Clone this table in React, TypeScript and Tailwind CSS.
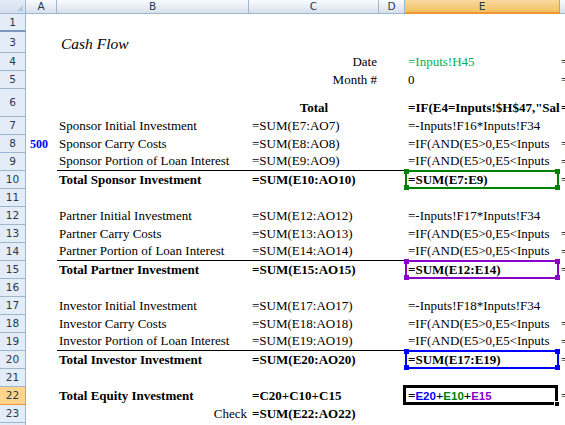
import React from "react";

type RowDef = {
  n: number | null;
  h: number;
  a?: React.ReactNode;
  b?: React.ReactNode;
  bAlign?: "left" | "right";
  c?: React.ReactNode;
  cAlign?: "left" | "right" | "center";
  e?: React.ReactNode;
  f?: boolean;
  line?: boolean;
  box?: "green" | "purple" | "blue" | "active";
  sel?: boolean;
  thick?: boolean;
};

const B = ({ children }: { children: React.ReactNode }) => <span className="font-bold">{children}</span>;

const rows: RowDef[] = [
  { n: 1, h: 18, thick: true },
  {
    n: 3,
    h: 21,
    b: (
      <span className="italic text-[15.5px] pl-[2px] font-['Liberation_Serif','Times_New_Roman',serif]">
        Cash Flow
      </span>
    ),
  },
  { n: 4, h: 18, c: "Date", cAlign: "right", e: <span className="text-[#00B050]">=Inputs!H45</span>, f: true },
  { n: 5, h: 18, c: "Month #", cAlign: "right", e: "0", f: true },
  { n: 6, h: 28, c: <B>Total</B>, cAlign: "center", e: <B>=IF(E4=Inputs!$H$47,"Sal</B>, f: true },
  { n: 7, h: 18, b: "Sponsor Initial Investment", c: "=SUM(E7:AO7)", e: "=-Inputs!F16*Inputs!F34" },
  { n: 8, h: 18, a: <span className="font-bold text-[#0000FF] text-[12px]">500</span>, b: "Sponsor Carry Costs", c: "=SUM(E8:AO8)", e: "=IF(AND(E5>0,E5<Inputs", f: true },
  { n: 9, h: 18, b: "Sponsor Portion of Loan Interest", c: "=SUM(E9:AO9)", e: "=IF(AND(E5>0,E5<Inputs", f: true, line: true },
  { n: 10, h: 18, b: <B>Total Sponsor Investment</B>, c: <B>=SUM(E10:AO10)</B>, e: <B>=SUM(E7:E9)</B>, f: true, box: "green" },
  { n: 11, h: 18 },
  { n: 12, h: 18, b: "Partner Initial Investment", c: "=SUM(E12:AO12)", e: "=-Inputs!F17*Inputs!F34" },
  { n: 13, h: 18, b: "Partner Carry Costs", c: "=SUM(E13:AO13)", e: "=IF(AND(E5>0,E5<Inputs", f: true },
  { n: 14, h: 18, b: "Partner Portion of Loan Interest", c: "=SUM(E14:AO14)", e: "=IF(AND(E5>0,E5<Inputs", f: true, line: true },
  { n: 15, h: 18, b: <B>Total Partner Investment</B>, c: <B>=SUM(E15:AO15)</B>, e: <B>=SUM(E12:E14)</B>, f: true, box: "purple" },
  { n: 16, h: 18 },
  { n: 17, h: 18, b: "Investor Initial Investment", c: "=SUM(E17:AO17)", e: "=-Inputs!F18*Inputs!F34" },
  { n: 18, h: 18, b: "Investor Carry Costs", c: "=SUM(E18:AO18)", e: "=IF(AND(E5>0,E5<Inputs", f: true },
  { n: 19, h: 18, b: "Investor Portion of Loan Interest", c: "=SUM(E19:AO19)", e: "=IF(AND(E5>0,E5<Inputs", f: true, line: true },
  { n: 20, h: 18, b: <B>Total Investor Investment</B>, c: <B>=SUM(E20:AO20)</B>, e: <B>=SUM(E17:E19)</B>, f: true, box: "blue" },
  { n: 21, h: 18 },
  {
    n: 22,
    h: 18,
    b: <B>Total Equity Investment</B>,
    c: <B>=C20+C10+C15</B>,
    e: (
      <span className="font-bold">
        =<span className="text-[#0000FF] font-['Liberation_Sans',sans-serif] text-[11.5px]">E20</span>+
        <span className="text-[#008000] font-['Liberation_Sans',sans-serif] text-[11.5px]">E10</span>+
        <span className="text-[#8B00C8] font-['Liberation_Sans',sans-serif] text-[11.5px]">E15</span>
      </span>
    ),
    f: true,
    box: "active",
    sel: true,
  },
  { n: 23, h: 18, b: "Check", bAlign: "right", c: <B>=SUM(E22:AO22)</B> },
  { n: 24, h: 18 },
];

const boxColor: Record<string, string> = {
  green: "border-[#008000]",
  purple: "border-[#8B00C8]",
  blue: "border-[#0000FF]",
};
const handleColor: Record<string, string> = {
  green: "bg-[#008000]",
  purple: "bg-[#8B00C8]",
  blue: "bg-[#0000FF]",
};

function RangeBox({ kind }: { kind: "green" | "purple" | "blue" | "active" }) {
  if (kind === "active") {
    return (
      <div className="absolute left-[-2px] right-[2px] top-[-2px] bottom-[0px] border-[3px] border-black pointer-events-none">
        <div className="absolute right-[-5px] bottom-[-5px] w-[6px] h-[6px] bg-black border border-white" />
      </div>
    );
  }
  return (
    <div className={`absolute left-0 right-[1px] top-[-1px] bottom-[0px] border-2 ${boxColor[kind]} pointer-events-none`}>
      <div className={`absolute left-[-3px] top-[-3px] w-[5px] h-[5px] ${handleColor[kind]}`} />
      <div className={`absolute right-[-3px] top-[-3px] w-[5px] h-[5px] ${handleColor[kind]}`} />
      <div className={`absolute left-[-3px] bottom-[-3px] w-[5px] h-[5px] ${handleColor[kind]}`} />
      <div className={`absolute right-[-3px] bottom-[-3px] w-[5px] h-[5px] ${handleColor[kind]}`} />
    </div>
  );
}

function ColHead({ w, label, sel }: { w: string; label: string; sel?: boolean }) {
  return (
    <div
      className={`${w} shrink-0 h-full flex items-center justify-center border-r text-[11px] leading-none ${
        sel
          ? "bg-gradient-to-b from-[#F9D99F] to-[#F1C15F] border-[#F29536] border-b-[2px] border-b-[#F29536]"
          : "bg-gradient-to-b from-[#F9FCFD] to-[#D8E0EC] border-[#9EB6CE] border-b border-b-[#9EB6CE]"
      }`}
    >
      <span className="text-[#27384F] font-['DejaVu_Sans',sans-serif] text-[10.5px]">{label}</span>
    </div>
  );
}

export default function App() {
  return (
    <div className="w-[565px] h-[425px] overflow-hidden bg-white font-['Liberation_Serif',serif] text-[13px] text-black">
      <div className="flex h-[14px]">
        <div className="w-[26px] shrink-0 h-full bg-gradient-to-b from-[#E4ECF7] to-[#D3DEEE] border-r border-b border-[#9EB6CE] relative">
          <div className="absolute right-[2px] bottom-[2px] w-0 h-0 border-l-[6px] border-l-transparent border-b-[6px] border-b-[#B6C8DE]" />
        </div>
        <ColHead w="w-[31px]" label="A" />
        <ColHead w="w-[192px]" label="B" />
        <ColHead w="w-[130px]" label="C" />
        <ColHead w="w-[26px]" label="D" />
        <ColHead w="w-[155px]" label="E" sel />
        <ColHead w="w-[40px]" label="F" />
      </div>
      {rows.map((r, i) => (
        <div key={i} className="flex" style={{ height: r.h }}>
          <div
            className={`w-[26px] shrink-0 h-full flex items-center justify-center border-r ${
              r.sel
                ? "bg-[#FFD58D] border-[#F29536] border-b border-b-[#F29536]"
                : r.thick
                ? "bg-[#E4ECF7] border-[#9EB6CE] border-b-2 border-b-[#7C98BC]"
                : "bg-[#E4ECF7] border-[#9EB6CE] border-b border-b-[#9EB6CE]"
            }`}
          >
            <span className="text-[#27384F] font-['DejaVu_Sans',sans-serif] text-[10.5px] leading-none">{r.n}</span>
          </div>
          <div className="w-[31px] shrink-0 h-full flex items-end pb-[1px] pl-[4px] leading-[16px] overflow-hidden whitespace-nowrap">
            {r.a}
          </div>
          <div
            className={`w-[192px] shrink-0 h-full flex items-end pb-[1px] leading-[16px] overflow-hidden whitespace-nowrap ${
              r.bAlign === "right" ? "justify-end pr-[2px]" : "pl-[2px]"
            } ${r.line ? "border-b border-black" : ""}`}
          >
            {r.b}
          </div>
          <div
            className={`w-[130px] shrink-0 h-full flex items-end pb-[1px] leading-[16px] overflow-hidden whitespace-nowrap ${
              r.cAlign === "right" ? "justify-end pr-[2px]" : r.cAlign === "center" ? "justify-center" : "pl-[3px]"
            } ${r.line ? "border-b border-black" : ""}`}
          >
            {r.c}
          </div>
          <div className={`w-[26px] shrink-0 h-full ${r.line ? "border-b border-black" : ""}`} />
          <div
            className={`w-[155px] shrink-0 h-full relative flex items-end pb-[1px] pl-[3px] leading-[16px] whitespace-nowrap ${
              r.line ? "border-b border-black" : ""
            }`}
          >
            <div className="overflow-hidden w-full">{r.e}</div>
            {r.box && <RangeBox kind={r.box} />}
          </div>
          <div className="flex-1 h-full flex items-end pb-[1px] pl-[1px] leading-[16px] overflow-hidden whitespace-nowrap">
            {r.f ? (r.n === 6 ? <B>=</B> : "=") : null}
          </div>
        </div>
      ))}
    </div>
  );
}
